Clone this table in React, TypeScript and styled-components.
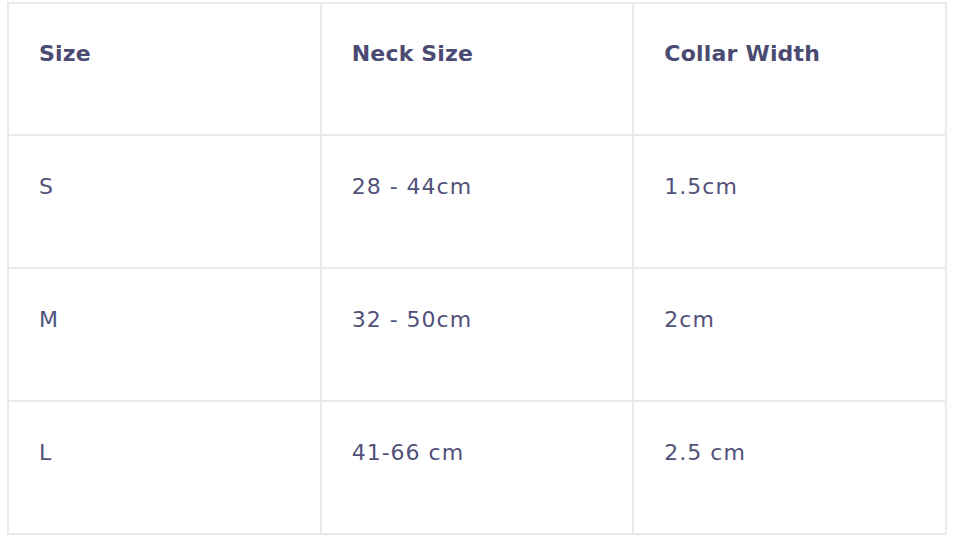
import * as React from "react";
import styled, { createGlobalStyle } from "styled-components";

const GlobalStyle = createGlobalStyle`
  html, body {
    margin: 0;
    padding: 0;
    background: #ffffff;
  }
  body {
    font-family: "DejaVu Sans", "Noto Sans", sans-serif;
  }
`;

const rows = [
  ["S", "28 - 44cm", "1.5cm"],
  ["M", "32 - 50cm", "2cm"],
  ["L", "41-66 cm", "2.5 cm"],
];

const Wrapper = styled.div`
  padding: 2px 15px 0 7px;
`;

const SizeTable = styled.table`
  width: 940px;
  border-collapse: collapse;
  table-layout: fixed;
  color: #4b4b73;
`;

const Row = styled.tr<{ head?: boolean }>`
  height: ${(p) => (p.head ? "132px" : "133px")};
`;

const Cell = styled.td<{ head?: boolean }>`
  border: 2px solid #eaeaea;
  vertical-align: top;
  padding: ${(p) => (p.head ? "36px" : "37px")} 30px 0 30px;
  font-size: 22px;
  line-height: 28px;
  font-weight: ${(p) => (p.head ? 700 : 400)};
  color: ${(p) => (p.head ? "#4a4a72" : "#51517a")};
  letter-spacing: ${(p) => (p.head ? "0.2px" : "1px")};
  white-space: nowrap;
`;

export default function App() {
  return (
    <>
      <GlobalStyle />
      <Wrapper>
        <SizeTable>
          <tbody>
            <Row head>
              <Cell head>Size</Cell>
              <Cell head>Neck Size</Cell>
              <Cell head>Collar Width</Cell>
            </Row>
            {rows.map((r) => (
              <Row key={r[0]}>
                {r.map((c, i) => (
                  <Cell key={i}>{c}</Cell>
                ))}
              </Row>
            ))}
          </tbody>
        </SizeTable>
      </Wrapper>
    </>
  );
}
